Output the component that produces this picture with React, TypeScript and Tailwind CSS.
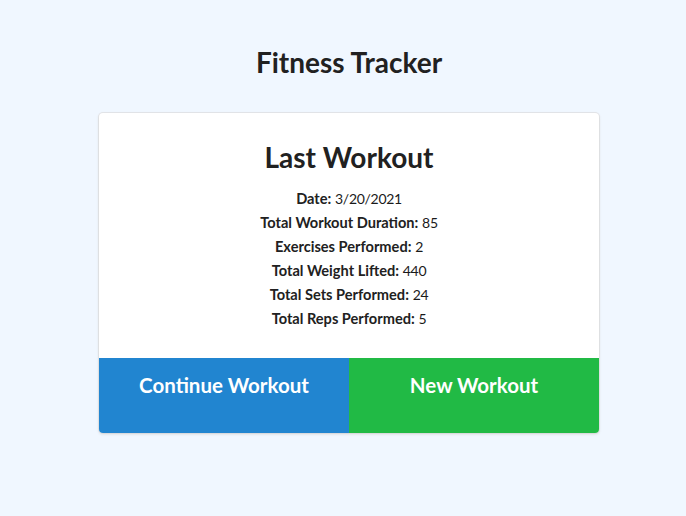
const stats = [
  { label: 'Date', value: '3/20/2021' },
  { label: 'Total Workout Duration', value: '85' },
  { label: 'Exercises Performed', value: '2' },
  { label: 'Total Weight Lifted', value: '440' },
  { label: 'Total Sets Performed', value: '24' },
  { label: 'Total Reps Performed', value: '5' }
]

export default function App() {
  return (
    <div className="min-h-screen bg-[#f0f7ff] pl-[12px] font-['Lato',sans-serif] text-[#212121]">
      <h1 className="pt-[44px] text-center text-[28px] font-bold leading-[36px]">
        Fitness Tracker
      </h1>

      <div className="mx-auto mt-[33px] w-[500px] overflow-hidden rounded-[4px] bg-white shadow-[0_1px_3px_0_#d4d4d5,0_0_0_1px_#e4e6ea]">
        <div className="pt-[26px] pb-[27px] text-center">
          <h2 className="text-[28px] font-bold leading-[36px]">Last Workout</h2>
          <div className="mt-[12px] text-[14.6px]">
            {stats.map((s) => (
              <p key={s.label} className="h-[24px] leading-[24px]">
                <span className="font-bold">{s.label}:</span>{' '}
                <span className="text-[14px] leading-[24px] tracking-[-0.3px] text-[#1a1a1a]">{s.value}</span>
              </p>
            ))}
          </div>
        </div>

        <div className="grid grid-cols-2">
          <button className="flex h-[75px] justify-center bg-[#2185d0] pt-[15px] text-[20.5px] font-bold leading-[24px] text-white">
            Continue Workout
          </button>
          <button className="flex h-[75px] justify-center bg-[#21ba45] pt-[15px] text-[20.5px] font-bold leading-[24px] text-white">
            New Workout
          </button>
        </div>
      </div>
    </div>
  )
}
